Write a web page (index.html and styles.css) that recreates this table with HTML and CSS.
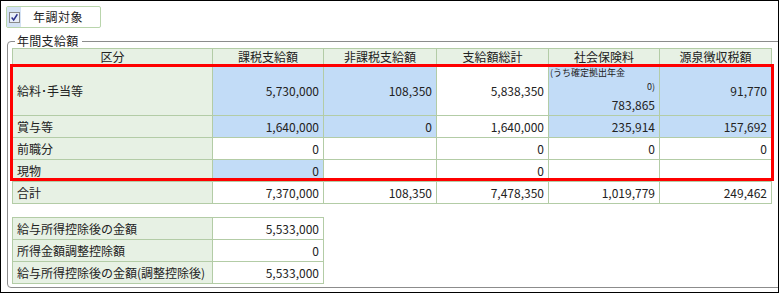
FILE: index.html
```html
<!DOCTYPE html>
<html lang="ja">
<head>
<meta charset="utf-8">
<link rel="stylesheet" href="styles.css">
</head>
<body>
<div class="frame">
  <div class="check-panel">
    <span class="check-box-wrap">
      <span class="check-box">
        <svg width="11" height="11" viewBox="0 0 11 11"><path d="M2 5.5 L4.5 8.5 L9 1.5" fill="none" stroke="#2a2f8a" stroke-width="1.8"/></svg>
      </span>
    </span>
    <span class="check-label">年調対象</span>
  </div>
  <section class="group">
    <span class="group-title">年間支給額</span>
    <div class="table-wrap">
      <table class="grid">
        <colgroup>
          <col class="c-label"><col class="c1"><col class="c2"><col class="c3"><col class="c4"><col class="c5">
        </colgroup>
        <thead>
          <tr class="head"><th>区分</th><th>課税支給額</th><th>非課税支給額</th><th>支給額総計</th><th>社会保険料</th><th>源泉徴収税額</th></tr>
        </thead>
        <tbody>
          <tr class="r-tall">
            <td class="lbl">給料･手当等</td>
            <td class="num blue">5,730,000</td>
            <td class="num blue">108,350</td>
            <td class="num">5,838,350</td>
            <td class="num blue multi">
              <div class="small">(うち確定拠出年金</div>
              <div class="small right">0)</div>
              <div>783,865</div>
            </td>
            <td class="num blue">91,770</td>
          </tr>
          <tr>
            <td class="lbl">賞与等</td>
            <td class="num blue">1,640,000</td>
            <td class="num blue">0</td>
            <td class="num">1,640,000</td>
            <td class="num blue">235,914</td>
            <td class="num blue">157,692</td>
          </tr>
          <tr>
            <td class="lbl">前職分</td>
            <td class="num">0</td>
            <td class="num"></td>
            <td class="num">0</td>
            <td class="num">0</td>
            <td class="num">0</td>
          </tr>
          <tr>
            <td class="lbl">現物</td>
            <td class="num blue">0</td>
            <td class="num"></td>
            <td class="num">0</td>
            <td class="num"></td>
            <td class="num"></td>
          </tr>
          <tr class="total">
            <td class="lbl">合計</td>
            <td class="num">7,370,000</td>
            <td class="num">108,350</td>
            <td class="num">7,478,350</td>
            <td class="num">1,019,779</td>
            <td class="num">249,462</td>
          </tr>
        </tbody>
      </table>
      <div class="highlight"></div>
    </div>
    <table class="grid sub">
      <colgroup><col class="c-label"><col class="c1"></colgroup>
      <tbody>
        <tr><td class="lbl">給与所得控除後の金額</td><td class="num">5,533,000</td></tr>
        <tr><td class="lbl">所得金額調整控除額</td><td class="num">0</td></tr>
        <tr><td class="lbl">給与所得控除後の金額(調整控除後)</td><td class="num">5,533,000</td></tr>
      </tbody>
    </table>
  </section>
</div>
</body>
</html>
```
FILE: styles.css
```css
* { box-sizing: border-box; }
html, body { margin: 0; padding: 0; background: #fff; }
body {
  font-family: "Noto Sans CJK JP", "Noto Sans", sans-serif;
  font-size: 12px;
  color: #222;
}
.frame {
  width: 779px;
  height: 293px;
  border: 1px solid #000;
  overflow: hidden;
  padding: 5px 0 0 5px;
}
.check-panel {
  width: 95px;
  height: 22px;
  border: 1px solid #b9d5ac;
  border-radius: 2px;
  display: flex;
  align-items: center;
}
.check-box-wrap {
  flex: none;
  width: 14px;
  height: 20px;
  background: #d4e2f4;
  display: flex;
  align-items: center;
  justify-content: center;
}
.check-box {
  width: 11px;
  height: 11px;
  border: 1px solid #8a8a8a;
  background: #e8eef8;
  display: flex;
  align-items: center;
  justify-content: center;
}
.check-box svg { display: block; width: 9px; height: 9px; }
.check-label {
  margin-left: 12px;
  font-size: 12px;
  line-height: 20px;
  letter-spacing: 0.5px;
}
.group {
  position: relative;
  margin: 13px 0 0 1px;
  width: 790px;
  height: 247px;
  border: 1px solid #8c8c8c;
  border-radius: 4px;
  padding: 6px 0 0 4px;
}
.group-title {
  position: absolute;
  left: 7px;
  top: -8px;
  background: #fff;
  font-size: 12px;
  line-height: 14px;
  padding: 0 3px 0 2px;
  letter-spacing: 0.3px;
}
.table-wrap {
  position: relative;
  width: 760px;
}
.grid {
  border-collapse: collapse;
  table-layout: fixed;
}
.grid td, .grid th {
  border: 1px solid #b3cca6;
  padding: 0 4px;
  height: 22px;
  line-height: 14px;
  font-weight: normal;
  white-space: nowrap;
  overflow: hidden;
}
.grid th {
  background: #e7f1e4;
  text-align: center;
  height: 17px;
  line-height: 14px;
}
col.c-label { width: 200px; }
col.c1 { width: 111px; }
col.c2 { width: 113px; }
col.c3 { width: 112px; }
col.c4 { width: 111px; }
col.c5 { width: 112px; }
.grid .lbl { background: #e7f1e4; text-align: left; padding-left: 4px; }
.grid .num { text-align: right; }
.grid .blue { background: #c2dcf7; }
.r-tall td { height: 50px; }
.multi { padding-top: 1px; }
.multi .small {
  font-size: 9px;
  line-height: 11px;
  text-align: left;
  margin-left: -3px;
}
.multi .small.right { text-align: right; line-height: 18px; }
.multi div { line-height: 18px; }
.highlight {
  position: absolute;
  left: -2px;
  top: 16px;
  width: 764px;
  height: 117px;
  border: 3px solid #f00;
  pointer-events: none;
}
.sub { margin-top: 13px; }
.sub td { height: 22px; }
```
